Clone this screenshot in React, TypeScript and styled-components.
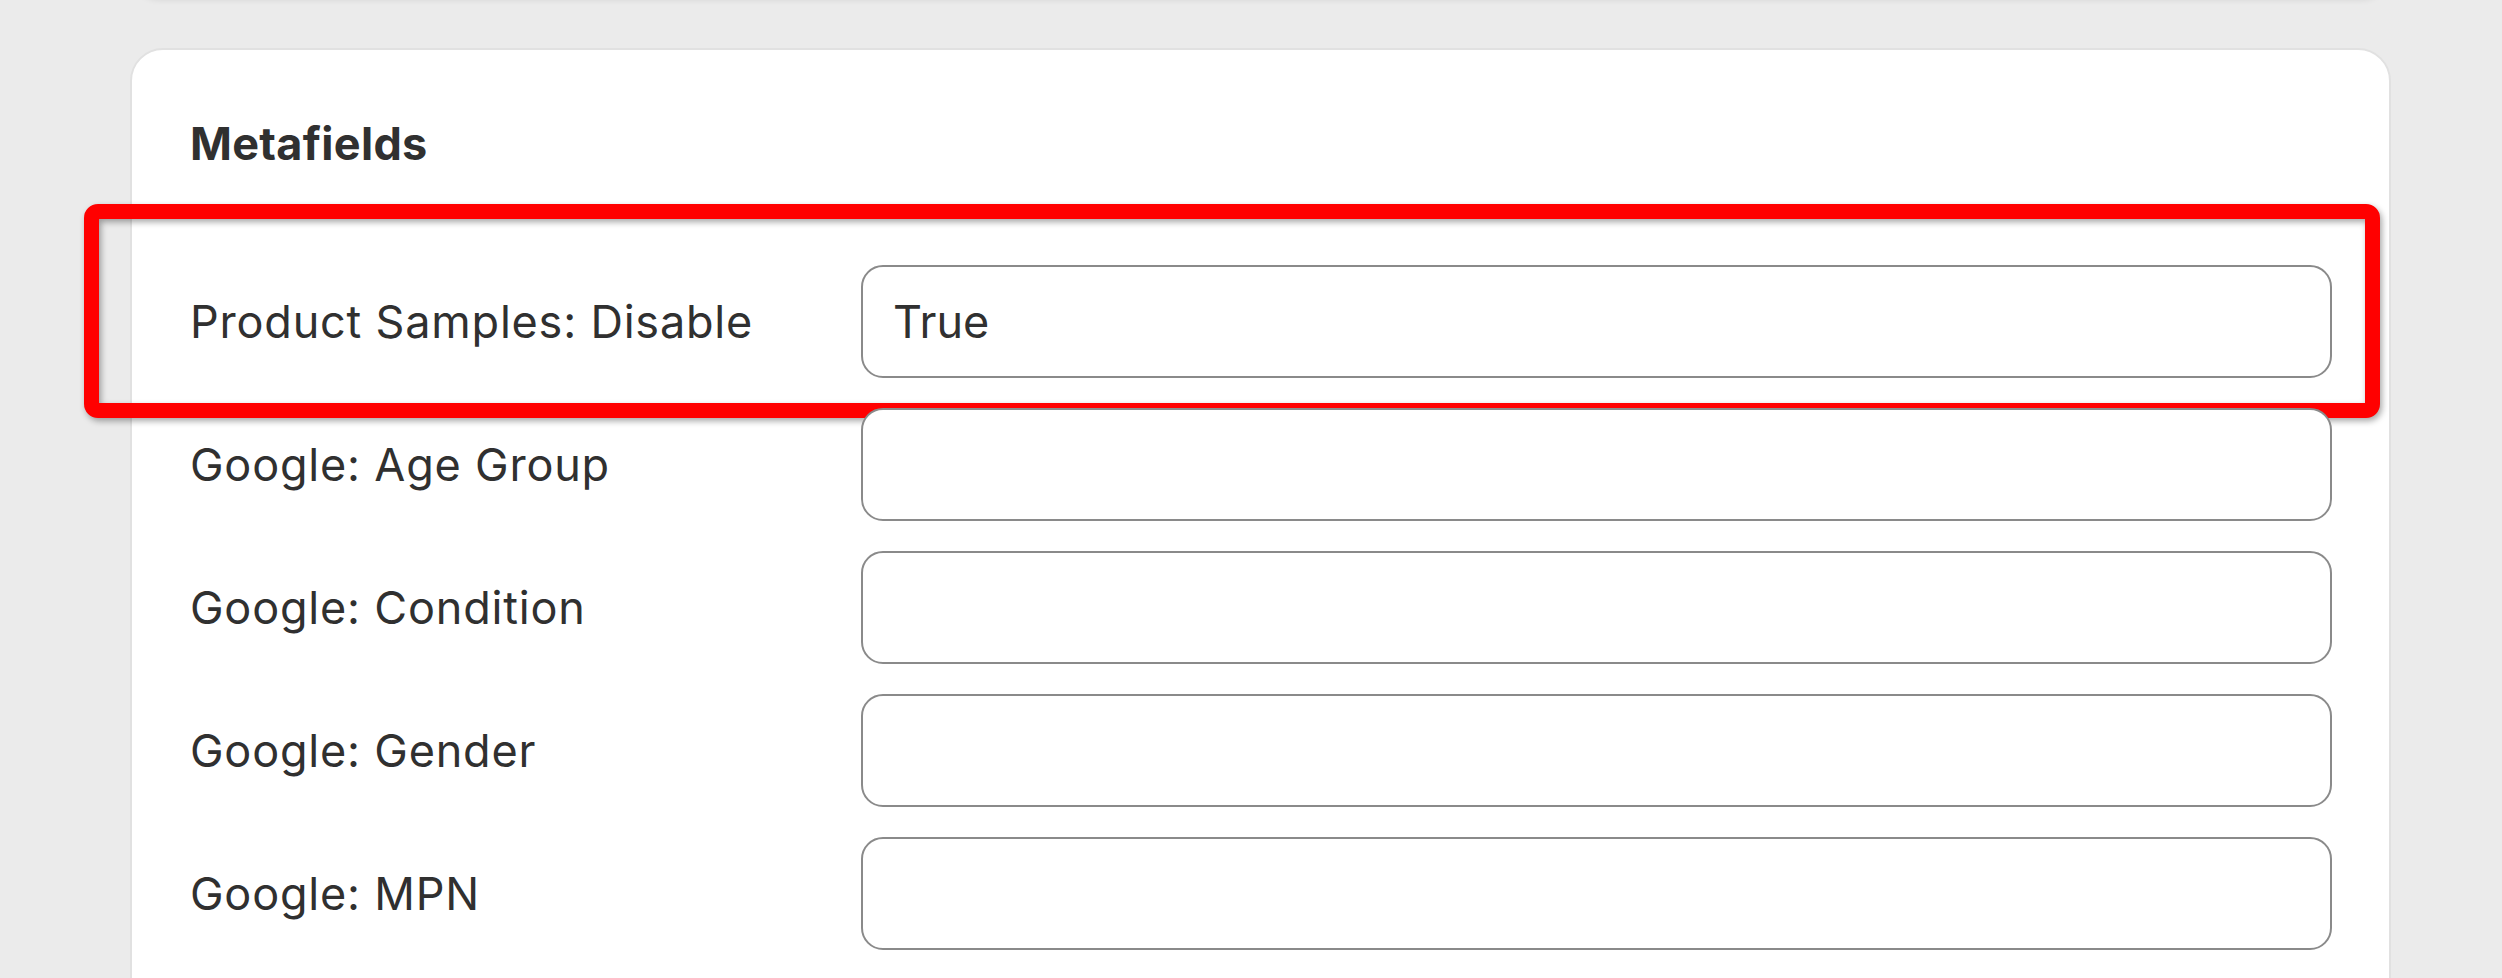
import React from 'react';
import styled, { createGlobalStyle } from 'styled-components';

interface Field {
  id: number;
  label: string;
  value: string;
  highlighted?: boolean;
}

const fields: Field[] = [
  { id: 1, label: 'Product Samples: Disable', value: 'True', highlighted: true },
  { id: 2, label: 'Google: Age Group', value: '' },
  { id: 3, label: 'Google: Condition', value: '' },
  { id: 4, label: 'Google: Gender', value: '' },
  { id: 5, label: 'Google: MPN', value: '' },
];

const GlobalStyle = createGlobalStyle`
  html, body {
    margin: 0;
    padding: 0;
    background: #ebebeb;
    font-family: Inter, "Noto Sans", "Liberation Sans", sans-serif;
    color: #303030;
    overflow: hidden;
  }
`;

const Page = styled.div`
  display: flex;
  flex-direction: column;
  padding: 0 111px 0 130px;
  min-height: 978px;
`;

const PrevCard = styled.div`
  height: 60px;
  margin-top: -62px;
  background: #ffffff;
  border-radius: 33px;
  box-shadow: 0 2px 6px rgba(0, 0, 0, 0.09);
`;

const Card = styled.section`
  margin-top: 50px;
  background: #ffffff;
  border: 2px solid #e1e1e1;
  border-radius: 33px;
  padding: 67px 57px 80px 58px;
`;

const Heading = styled.h2`
  margin: 0;
  font-size: 45px;
  line-height: 54px;
  font-weight: 650;
  letter-spacing: 0.3px;
  color: #303030;
`;

const FieldList = styled.div`
  display: flex;
  flex-direction: column;
  gap: 30px;
  margin-top: 94px;
`;

const Row = styled.div`
  position: relative;
  display: grid;
  grid-template-columns: 671px 1fr;
  align-items: center;
`;

const Label = styled.label`
  font-size: 45px;
  line-height: 54px;
  letter-spacing: 0.8px;
  color: #303030;
  white-space: nowrap;
`;

const Input = styled.input`
  box-sizing: border-box;
  width: 100%;
  height: 113px;
  padding: 0 30px;
  border: 2px solid #8a8a8a;
  border-radius: 22px;
  background: #ffffff;
  font-family: inherit;
  font-size: 45px;
  color: #303030;
  outline: none;
`;

const Highlight = styled.div`
  position: absolute;
  left: -106px;
  top: -61px;
  right: -48px;
  bottom: -40px;
  border: 15px solid #ff0000;
  border-radius: 14px;
  pointer-events: none;
  filter: drop-shadow(2px 3px 3px rgba(0, 0, 0, 0.35));
`;

const App: React.FC = () => {
  return (
    <>
      <GlobalStyle />
      <Page>
        <PrevCard />
        <Card>
          <Heading>Metafields</Heading>
          <FieldList>
            {fields.map((field) => (
              <Row key={field.id}>
                <Label htmlFor={`field-${field.id}`}>{field.label}</Label>
                <Input
                  id={`field-${field.id}`}
                  defaultValue={field.value}
                  readOnly
                />
                {field.highlighted && <Highlight />}
              </Row>
            ))}
          </FieldList>
        </Card>
      </Page>
    </>
  );
};

export default App;
